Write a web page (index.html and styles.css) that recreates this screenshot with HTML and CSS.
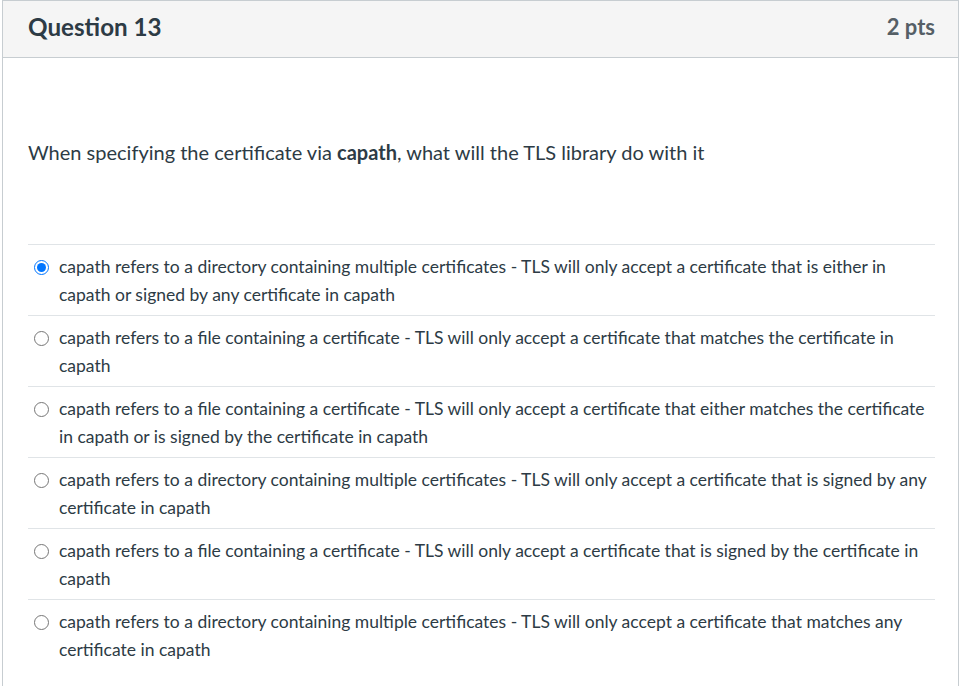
FILE: index.html
```html
<!DOCTYPE html>
<html>
<head>
<meta charset="utf-8">
<link rel="stylesheet" href="styles.css">
</head>
<body>
<div class="question">
  <div class="header">
    <h2 class="title">Question 13</h2>
    <span class="pts">2 pts</span>
  </div>
  <div class="content">
    <p class="text">When specifying the certificate via <strong>capath</strong>, what will the TLS library do with it</p>
    <div class="answers">
      <label class="answer"><input type="radio" name="a" checked><span>capath refers to a directory containing multiple certificates - TLS will only accept a certificate that is either in capath or signed by any certificate in capath</span></label>
      <label class="answer"><input type="radio" name="a"><span>capath refers to a file containing a certificate - TLS will only accept a certificate that matches the certificate in capath</span></label>
      <label class="answer"><input type="radio" name="a"><span>capath refers to a file containing a certificate - TLS will only accept a certificate that either matches the certificate in capath or is signed by the certificate in capath</span></label>
      <label class="answer"><input type="radio" name="a"><span>capath refers to a directory containing multiple certificates - TLS will only accept a certificate that is signed by any certificate in capath</span></label>
      <label class="answer"><input type="radio" name="a"><span>capath refers to a file containing a certificate - TLS will only accept a certificate that is signed by the certificate in capath</span></label>
      <label class="answer"><input type="radio" name="a"><span>capath refers to a directory containing multiple certificates - TLS will only accept a certificate that matches any certificate in capath</span></label>
    </div>
  </div>
</div>
</body>
</html>
```

FILE: styles.css
```css
html, body {
  margin: 0;
  padding: 0;
  background: #fff;
}
body {
  font-family: Lato, "Liberation Sans", sans-serif;
  color: #2d3b45;
}
.question {
  margin-left: 2px;
  width: 957px;
  box-sizing: border-box;
  border: 1px solid #c7cdd1;
  border-bottom: none;
  height: 700px;
}
.header {
  display: flex;
  justify-content: space-between;
  align-items: center;
  height: 56px;
  padding: 0 23px 0 25px;
  background: #f5f5f5;
  border-bottom: 1px solid #c7cdd1;
}
.title {
  margin: 0;
  font-size: 24.2px;
  line-height: 28px;
  font-weight: 700;
  color: #2d3b45;
  position: relative;
  top: -2px;
}
.pts {
  font-size: 22px;
  line-height: 28px;
  font-weight: 700;
  color: #555f66;
  position: relative;
  top: -2px;
}
.content {
  padding: 0 23px 0 25px;
}
.text {
  margin: 0;
  padding: 80px 0 0;
  height: 106px;
  font-size: 20px;
  line-height: 28px;
}
.answers {
  border-top: 1px solid #e0e4e7;
}
.answer {
  display: flex;
  align-items: flex-start;
  padding: 8px 0 6px 0;
  border-bottom: 1px solid #e0e4e7;
  font-size: 17.5px;
  line-height: 28px;
}
.answer:last-child {
  border-bottom: none;
}
.answer input {
  margin: 7px 10px 0 6px;
  width: 15px;
  height: 15px;
  flex: none;
}
```
